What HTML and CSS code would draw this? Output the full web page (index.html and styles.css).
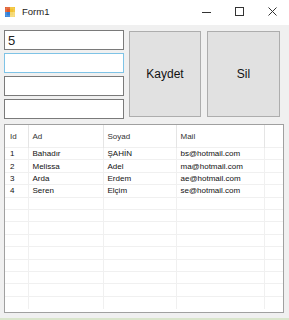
FILE: index.html
```html
<!DOCTYPE html>
<html>
<head>
<meta charset="utf-8">
<meta name="viewport" content="width=device-width, initial-scale=1">
<link rel="stylesheet" href="styles.css">
</head>
<body>

<div class="window">
  <div class="titlebar">
    <svg class="appicon" width="10" height="10" viewBox="0 0 10 10">
      <rect x="0" y="0" width="5" height="5" fill="#e05a2a"/>
      <rect x="5" y="0" width="5" height="5" fill="#f2c12e"/>
      <rect x="0" y="5" width="5" height="5" fill="#2f7fd8"/>
      <rect x="5" y="5" width="5" height="5" fill="#f5d870"/>
      <rect x="1" y="1" width="8" height="8" fill="none" stroke="#ffffff" stroke-opacity="0.4" stroke-width="0.6"/>
    </svg>
    <span class="title">Form1</span>
    <div class="controls">
      <svg width="9" height="9" viewBox="0 0 9 9"><line x1="0" y1="5.5" x2="9" y2="5.5" stroke="#333" stroke-width="1"/></svg>
      <svg width="9" height="9" viewBox="0 0 9 9"><rect x="0.5" y="0.5" width="8" height="8" fill="none" stroke="#333" stroke-width="1"/></svg>
      <svg width="9" height="9" viewBox="0 0 9 9"><path d="M0.5 0.5 L8.5 8.5 M8.5 0.5 L0.5 8.5" stroke="#333" stroke-width="1"/></svg>
    </div>
  </div>

  <div class="client">
    <div class="top">
      <div class="inputs">
        <input class="textbox" type="text" value="5">
        <input class="textbox focused" type="text" value="">
        <input class="textbox" type="text" value="">
        <input class="textbox" type="text" value="">
      </div>
      <button class="btn">Kaydet</button>
      <button class="btn sil">Sil</button>
    </div>

    <div class="listview">
      <table class="grid">
        <colgroup>
          <col class="c-id"><col class="c-ad"><col class="c-soyad"><col class="c-mail"><col class="c-rest">
        </colgroup>
        <thead><tr>
          <th>Id</th><th>Ad</th><th>Soyad</th><th>Mail</th><th class="last"></th>
        </tr></thead>
        <tbody id="rows">
        </tbody>
      </table>
    </div>
  </div>
  <div class="statusline"></div>
</div>

<script>
var data = [
  ['1', 'Bahadır', 'ŞAHİN', 'bs@hotmail.com'],
  ['2', 'Melissa', 'Adel', 'ma@hotmail.com'],
  ['3', 'Arda', 'Erdem', 'ae@hotmail.com'],
  ['4', 'Seren', 'Elçim', 'se@hotmail.com']
];
var tbody = document.getElementById('rows');
for (var i = 0; i < 13; i++) {
  var tr = document.createElement('tr');
  var r = data[i] || ['', '', '', ''];
  for (var j = 0; j < 5; j++) {
    var td = document.createElement('td');
    td.textContent = j < 4 ? r[j] : '';
    tr.appendChild(td);
  }
  tbody.appendChild(tr);
}
</script>

</body>
</html>
```

FILE: styles.css
```css
body {
    margin: 0;
    font-family: "Liberation Sans", Arial, sans-serif;
    background: #ffffff;
}

.window {
    width: 289px;
    height: 320px;
    background: #f0f0f0;
    display: flex;
    flex-direction: column;
    overflow: hidden;
}

/* Title bar */
.titlebar {
    height: 25px;
    background: #ffffff;
    display: flex;
    align-items: center;
    flex-shrink: 0;
}

.appicon {
    margin-left: 5px;
    margin-top: -2px;
}

.title {
    margin-left: 7px;
    font-size: 9.5px;
    color: #222;
    margin-top: -2px;
}

.controls {
    margin-left: auto;
    display: flex;
    gap: 24px;
    margin-right: 12px;
    margin-top: -3px;
}

/* Form area */
.client {
    padding: 5px 5px 0 4px;
    flex: 1;
}

.top {
    display: flex;
    align-items: flex-start;
}

.inputs {
    display: flex;
    flex-direction: column;
    gap: 3px;
    width: 120px;
}

.textbox {
    box-sizing: border-box;
    width: 120px;
    height: 20px;
    margin: 0;
    border: 1px solid #7a7a7a;
    background: #fff;
    padding: 0 3px;
    font-family: "Liberation Sans", Arial, sans-serif;
    font-size: 13px;
    color: #222;
    outline: none;
}

.textbox.focused {
    border-color: #7ec3e6;
}

.btn {
    box-sizing: border-box;
    width: 72px;
    height: 86px;
    margin: 1px 0 0 5px;
    border: 1px solid #adadad;
    background: #e1e1e1;
    font-family: "Liberation Sans", Arial, sans-serif;
    font-size: 12px;
    color: #111;
    padding: 0;
}

.btn.sil {
    width: 73px;
    margin-left: 6px;
}

/* List view */
.listview {
    box-sizing: border-box;
    margin-top: 5px;
    width: 280px;
    height: 189px;
    border: 1px solid #a0a0a0;
    background: #fff;
    overflow: hidden;
}

.grid {
    table-layout: fixed;
    border-collapse: collapse;
    border-spacing: 0;
    width: 278px;
    font-size: 8px;
    color: #111;
}

.c-id { width: 23px; }
.c-ad { width: 75px; }
.c-soyad { width: 73px; }
.c-mail { width: 88px; }
.c-rest { width: 19px; }

th {
    height: 22px;
    padding: 0 0 0 4px;
    text-align: left;
    font-weight: normal;
    color: #333;
    border-right: 1px solid #e5e5e5;
}

th.last, td:last-child {
    border-right: none;
}

td {
    height: 12.4px;
    padding: 0 0 0 4px;
    line-height: 11px;
    border-top: 1px solid #f0f0f0;
    border-right: 1px solid #f0f0f0;
    white-space: nowrap;
    overflow: hidden;
    box-sizing: border-box;
}

th:first-child, td:first-child {
    padding-left: 5px;
}

.statusline {
    height: 2px;
    background: #d9e5cc;
    flex-shrink: 0;
}
```
